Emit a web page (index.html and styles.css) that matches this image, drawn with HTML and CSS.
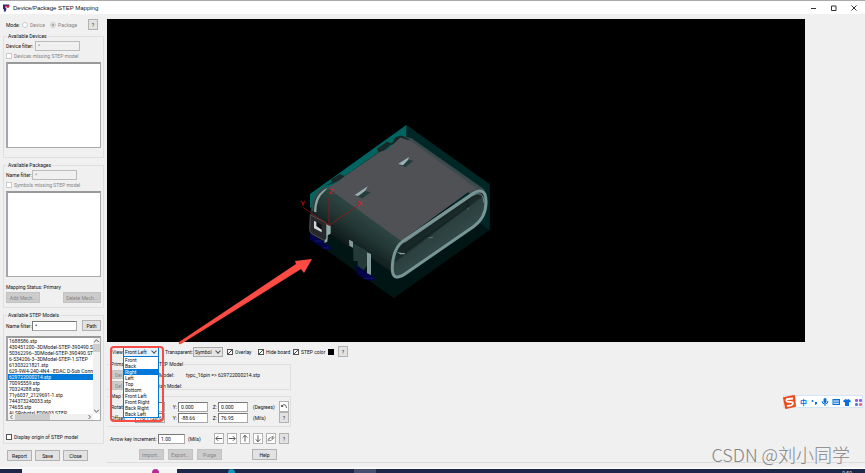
FILE: index.html
```html
<!DOCTYPE html>
<html lang="en">
<head>
<meta charset="utf-8">
<title>Device/Package STEP Mapping</title>
<link rel="stylesheet" href="styles.css">
</head>
<body>
<header class="titlebar">
  <svg class="app-icon" viewBox="0 0 8 8"><path d="M0 0h7v3H5L3 5H0z" fill="#25267c"/><path d="M2 1h6L6 4 4 3 2 6z" fill="#d3262f"/><path d="M1 4l3 1-1 3H1z" fill="#25267c"/><path d="M3 2l2 1-2 1z" fill="#fff"/></svg>
  <h1>Device/Package STEP Mapping</h1>
  <button class="win" aria-label="Minimize"><svg viewBox="0 0 6 6"><path d="M0 3.5h5"/></svg></button>
  <button class="win" aria-label="Maximize"><svg viewBox="0 0 6 6"><path d="M.5 1h4.500v4.500H.5z"/></svg></button>
  <button class="win" aria-label="Close"><svg viewBox="0 0 6 6"><path d="M.5.5l5 5M5.500.5l-5 5"/></svg></button>
</header>
<main class="workspace">
  <aside class="sidebar">
    <div class="row mode">
      <span class="mode-name">Mode:</span>
      <label class="choice off"><input type="radio" name="mode" disabled>Device</label>
      <label class="choice off"><input type="radio" name="mode" checked disabled>Package</label>
      <button class="help">?</button>
    </div>
    <section class="group devices">
      <h2>Available Devices</h2>
      <div class="row"><label class="device-name" for="df">Device filter:</label><input class="field off" id="df" type="text" value="*" disabled></div>
      <label class="row off"><input type="checkbox" disabled>Devices missing STEP model</label>
      <div class="listbox" role="listbox" aria-label="Devices"></div>
    </section>
    <section class="group packages">
      <h2>Available Packages</h2>
      <div class="row"><label class="filter-name" for="pf">Name filter:</label><input class="field off" id="pf" type="text" value="*" disabled></div>
      <label class="row off"><input type="checkbox" disabled>Symbols missing STEP model</label>
      <div class="listbox" role="listbox" aria-label="Packages"></div>
      <p class="status">Mapping Status: Primary</p>
      <div class="row between"><button class="btn wide" disabled>Add Mech...</button><button class="btn wider" disabled>Delete Mech...</button></div>
    </section>
    <section class="group models">
      <h2>Available STEP Models</h2>
      <div class="row"><label class="filter-name" for="nf">Name filter:</label><input class="field" id="nf" type="text" value="*"><button class="btn path">Path</button></div>
      <div class="listbox filled">
        <ul class="files" role="listbox" aria-label="STEP models">
          <li>1688586.stp</li><li>430451200--3DModel-STEP-390490.ST</li><li>50362296--3DModel-STEP-390490.ST</li><li>6-534206-3--3DModel-STEP-1.STEP</li><li>61303221821.stp</li><li>629-9W4-240-4N4 - EDAC D-Sub Conn</li><li class="selected">629722000214.stp</li><li>70095559.stp</li><li>70324288.stp</li><li>71y6037_2129691-1.stp</li><li>744373240033.stp</li><li>74655.stp</li><li>ALSRobotsLED0603.STEP</li>
        </ul>
        <div class="vscroll"><svg viewBox="0 0 6 4"><path d="M1 3l2-2 2 2"/></svg><i></i><svg viewBox="0 0 6 4"><path d="M1 1l2 2 2-2"/></svg></div>
        <div class="hscroll"><svg viewBox="0 0 4 6"><path d="M3 1L1 3l2 2"/></svg><i></i><svg viewBox="0 0 4 6"><path d="M1 1l2 2-2 2"/></svg></div>
      </div>
      <label class="row origin"><input type="checkbox">Display origin of STEP model</label>
    </section>
    <div class="row actions"><button class="btn">Report</button><button class="btn">Save</button><button class="btn">Close</button></div>
  </aside>
  <div class="content">
    <svg class="viewer" viewBox="107 19 698 323" role="img" aria-label="3D connector preview">
      <defs>
        <linearGradient id="side" gradientUnits="userSpaceOnUse" x1="220" y1="290" x2="145" y2="400"><stop offset="0" stop-color="#304946"/><stop offset=".45" stop-color="#233735"/><stop offset="1" stop-color="#091312"/></linearGradient>
        <linearGradient id="back" gradientUnits="userSpaceOnUse" x1="440" y1="145" x2="465" y2="110"><stop offset="0" stop-color="#414c4e"/><stop offset="1" stop-color="#0d302e"/></linearGradient>
        <linearGradient id="hole" gradientUnits="userSpaceOnUse" x1="400" y1="320" x2="460" y2="400"><stop offset="0" stop-color="#142322"/><stop offset=".35" stop-color="#1b2c2b"/><stop offset=".4" stop-color="#2b403f"/><stop offset="1" stop-color="#334b49"/></linearGradient>
      </defs>
      <svg x="295" y="115" width="210" height="190" viewBox="0 0 630 570">
        <path d="M334 30L584 208V345L296 550 45 370V237z" fill="#001514"/>
        <path d="M334 30L584 208V345L334 170z" fill="#002725"/>
        <path d="M334 30V75L45 280V237z" fill="#006461"/>
        <path d="M105 214Q70 222 52 264L45 310 95 330V350L175 405V430L200 450 212 415 229 430 290 472 294 420 325 378 345 350z" fill="url(#side)"/>
        <path d="M318 63L350 70 570 224 530 240z" fill="url(#back)"/>
        <path d="M88 214L111 202 108 193 134 178 149 183 250 112 246 101 276 80 291 85 300 68Q318 56 334 68L345 74 285 91 265 109 251 114 136 194 115 205z" fill="#182827"/>
        <path d="M316 68Q334 72 350 80L545 222Q532 223 515 235L319 378 98 218 128 201 147 185 254 111 278 103z" fill="#505155"/>
        <path d="M57 290Q57 235 99 218L92 226Q63 250 64 292z" fill="#8da4a5"/><path d="M52 288Q52 232 92 218" fill="none" stroke="#344c4b" stroke-width="6"/>
        <path d="M308 147L339 134 356 137 331 157z M178 241L210 227 227 232 202 250z" fill="#253c3c"/>
        <path d="M309 147L342 126 339 135 324 151z M178 241L218 214 211 227 190 243z" fill="#9ab0b3"/>
        <path d="M325 378L528 239Q575 208 573 264Q572 309 535 335L334 474Q289 506 292 454Q295 399 325 378z" fill="url(#hole)" stroke="#789596" stroke-width="9"/>
        <path d="M329 382L530 243Q566 221 567 264" fill="none" stroke="#9bb1b2" stroke-width="2"/>
        <path d="M332 404L512 278 517 254 524 273 350 399 320 420z" fill="#142423"/><path d="M305 411l11 7h13v-4h-9z" fill="#8ca3a5"/><path d="M400 369l14-2M519 278v6" stroke="#718988" stroke-width="2"/>
        <path d="M45 353L110 398 101 405 84 400 45 374z M185 449L239 489 230 499 210 492 185 477z" fill="#030447"/>
        <path d="M84 399h20M206 490h32M60 378h18" stroke="#101683" stroke-width="3"/>
        <path d="M175 385L216 407V452L206 465 188 453V438H175z" fill="#243a38"/><path d="M162 374l12 6v18l-11-6zM216 412l12 5v63l-12-5z" fill="#829c9c"/>
        <path d="M46 299L90 322Q97 326 97 335V367Q97 381 83 374L52 357Q44 352 44 343z" fill="#28292c" stroke="#505255" stroke-width="3"/>
        <path d="M94 328l13 5v23l-9 5-1 19-9 4 1-7 5-8z" fill="#91aaac"/>
        <path d="M57 316L80 330V352L57 341z" fill="#111"/><path d="M57 317l7 4v12l16 11v8l-23-12z" fill="#d0d7d8"/>
        <path d="M102 246V331L24 277M102 331L189 272" fill="none" stroke="#ad1014" stroke-width="2"/>
        <g class="axis"><text x="101" y="237">Z</text><text x="16" y="274">Y</text><text x="187" y="273">X</text></g>
      </svg>
      <path d="M179 342L296 264 295 261 312 259 304 273 301 269 181 344Q178 345 179 342z" fill="#fb4b43"/>
    </svg>
    <div class="panel">
      <div class="row toolbar">
        <label class="view-name" for="view">View:</label>
        <span class="combo view open"><select id="view"><option>Front Left</option></select>
          <ul class="popup" role="listbox" aria-label="View choices"><li>Front</li><li>Back</li><li class="selected">Right</li><li>Left</li><li>Top</li><li>Bottom</li><li>Front Left</li><li>Front Right</li><li>Back Right</li><li>Back Left</li></ul></span>
        <label class="trans-name" for="trans">Transparent:</label>
        <span class="combo"><select id="trans"><option>Symbol</option></select></span>
        <label class="check1"><input type="checkbox" checked>Overlay</label>
        <label class="check2"><input type="checkbox" checked>Hide board</label>
        <label class="check3"><input type="checkbox" checked>STEP color</label>
        <button class="swatch" aria-label="STEP color value"></button>
        <button class="help">?</button>
      </div>
      <section class="group primary">
        <h2><span class="half">Prima</span>STEP Model</h2>
        <div class="row"><button class="btn" disabled>Del</button><span class="kind">Model:</span><span>typc_16pin =&gt; 629722000214.stp</span></div>
        <div class="row"><button class="btn" disabled>Del</button><span class="kind">ian Model:</span></div>
      </section>
      <section class="group mapping">
        <h2>Map S</h2>
        <div class="axes">
          <span>Rotati</span><input class="field" aria-label="Rotation X" value=""><label for="ry">Y:</label><input class="field" id="ry" value="0.000"><label for="rz">Z:</label><input class="field" id="rz" value="0.000"><span>(Degrees)</span><button class="tool" aria-label="Reset"><svg viewBox="0 0 10 10"><path d="M2 5l2-2q4-1 4 4M2 3v2h2"/></svg></button>
          <span>Offset</span><input class="field" aria-label="Offset X" value="-70.1128.62"><label for="oy">Y:</label><input class="field" id="oy" value="-88.66"><label for="oz">Z:</label><input class="field" id="oz" value="76.95"><span>(Mils)</span><button class="help">?</button>
        </div>
      </section>
      <div class="row increment">
        <label for="inc">Arrow key increment:</label><input class="field" id="inc" value="1.00"><span class="unit">(Mils)</span>
        <button class="tool" aria-label="Left"><svg viewBox="0 0 10 10"><path d="M9 5H1M4 2L1 5l3 3"/></svg></button>
        <button class="tool" aria-label="Right"><svg viewBox="0 0 10 10"><path d="M1 5h8M6 2l3 3-3 3"/></svg></button>
        <button class="tool" aria-label="Up"><svg viewBox="0 0 10 10"><path d="M5 9V1M2 4l3-3 3 3"/></svg></button>
        <button class="tool" aria-label="Down"><svg viewBox="0 0 10 10"><path d="M5 1v8M2 6l3 3 3-3"/></svg></button>
        <button class="tool" aria-label="Rotate"><svg viewBox="0 0 10 10"><path d="M1 8l3-4 4-2-2 3 3-1-3 3-4 1zM1 6l3-2" stroke="#777"/></svg></button>
        <button class="help">?</button>
      </div>
      <div class="row commands"><button class="btn" disabled>Import...</button><button class="btn" disabled>Export...</button><button class="btn" disabled>Purge</button><button class="btn last">Help</button></div>
      <div class="marker"></div>
    </div>
  </div>
</main>
<footer class="taskbar">
  <span class="start"></span><span class="search"><i></i></span><span class="apps"><i></i><b></b><span>9:59</span></span>
</footer>
<div class="ime">
  <svg class="logo" viewBox="0 0 15 14"><path d="M1 3Q1 2 2 2L12 0q1 0 1 1l1 10q0 1-1 1L4 14q-1 0-1-1z" fill="#f04b1a"/><path d="M11 3.500L6 4q-2 .4-1.500 1.800Q5 7 8 6.800q3 0 3 1.500T9 10.300L5 11" fill="none" stroke="#fff" stroke-width="1.800"/></svg>
  <span>中</span>
  <svg viewBox="0 0 8 8"><circle cx="2.500" cy="3" r="1"/><path d="M5 4h2v2L5 7z"/></svg>
  <svg viewBox="0 0 8 8"><rect x="2.500" width="3" height="5" rx="1.500"/><path d="M1 3q0 3 3 3t3-3M4 6v2" fill="none" stroke="#0870d8"/></svg>
  <svg viewBox="0 0 8 8"><rect x="1" y="1.500" width="6.500" height="5" fill="#b4d8fa" stroke="#0870d8"/><path d="M2 3h5M2 4.500h5" stroke="#0870d8" stroke-width=".6"/></svg>
  <svg viewBox="0 0 8 8"><path d="M2.500 1Q4 2 5.500 1L8 3 7 4.500 6 4v4H2V4l-1 .5L0 3z"/></svg>
  <svg viewBox="0 0 8 8"><rect x="1" y="1" width="3" height="3" rx="1" fill="#955de7"/><rect x="5" y="1" width="3" height="3" rx="1" fill="#955de7"/><rect x="1" y="5" width="3" height="3" rx="1" fill="#5878e5"/><rect x="5" y="5" width="3" height="3" rx="1" fill="#e66a8f"/></svg>
</div>
<div class="watermark">CSDN @刘小同学</div>
</body>
</html>
```
FILE: styles.css
```css
* { box-sizing: border-box; }
body { margin: 0; min-height: 100vh; display: flex; flex-direction: column; position: relative; overflow: hidden; background: #f0f0f0; color: #111; font: 5px/8px Roboto, "Liberation Sans", sans-serif; }
h1, h2, p, ul { margin: 0; padding: 0; font: inherit; list-style: none; }
button, input, select { margin: 0; font: inherit; color: inherit; }
.titlebar { display: flex; align-items: center; height: 14px; flex: none; padding: 0 8px 0 3px; border-top: 1px solid #aaa; background: #fff; }
.titlebar h1 { flex: 1; margin-left: 3px; font: 6px/10px "Liberation Sans", sans-serif; }
.app-icon { width: 7px; height: 8px; }
.win { width: 6px; height: 6px; padding: 0; margin-left: 14px; border: 0; background: none; }
.win svg { display: block; fill: none; stroke: #333; stroke-width: 1; }
.workspace { display: flex; flex: 1; border-bottom: 2px solid #fafafa; }
.sidebar { width: 107px; flex: none; padding: 5px 3px 0; }
.content { flex: 1; min-width: 0; padding-top: 5px; }
.row { display: flex; align-items: center; white-space: nowrap; }
.row label, label.row { display: flex; align-items: center; flex: none; }
.off { color: #858585; }
.mode { height: 11px; padding-left: 3px; }
.mode-name { width: 16px; }
.mode .choice { width: 28px; }
.mode .help { margin-left: auto; margin-right: 6px; }
input[type="checkbox"], input[type="radio"] { appearance: none; flex: none; width: 6px; height: 6px; margin-right: 2px; border: 1px solid #555; background: #fff; }
input[type="radio"] { border-radius: 3px; }
input:disabled { border-color: #ccc; }
input[type="radio"]:checked { background: radial-gradient(#aaa 1px, #fff 2px); }
input[type="checkbox"]:checked { background: linear-gradient(135deg, #fff 40%, #444 50%, #fff 60%); }
.help, .btn, .tool { flex: none; padding: 0; height: 11px; border: 1px solid #b2b2b2; background: #e2e2e2; line-height: 8px; }
.help, .tool { width: 10px; }
.btn { width: 25px; }
.btn:disabled { color: #858585; background: #ccc; border-color: #c2c2c2; }
.group { position: relative; border: 1px solid #dfdfdf; padding: 4px 2px 0; }
.group h2 { position: absolute; top: -5px; left: 3px; padding: 0 1px; background: #f0f0f0; white-space: nowrap; }
.field { width: 45px; min-width: 0; height: 10px; padding: 0 2px; border: 1px solid #aaa; border-top-color: #777; border-left-color: #777; border-radius: 0; background: #fff; line-height: 8px; }
.field.off { background: #f0f0f0; border-color: #bbb; }
.sidebar .group .row { min-height: 10px; }
.row .device-name { width: 29px; }
.row .filter-name { width: 26px; }
.devices { margin: 6px 0 7px; height: 122px; }
.packages { height: 143px; margin-bottom: 7px; }
.models { height: 129px; }
.listbox { height: 86px; margin-top: 1px; border: 1px solid #aaa; border-top: 2px solid #999; border-left: 2px solid #a5a5ad; background: #fff; }
.status { margin-top: 6px; line-height: 8px; }
.between { justify-content: space-between; margin-top: 1px; }
.wide { width: 34px; }
.wider { width: 38px; }
.path { width: 19px; margin-left: 5px; }
.filled { display: grid; grid-template: 1fr 6px / 1fr 7px; height: 85px; margin-top: 5px; overflow: hidden; }
.files { overflow: hidden; min-height: 0; line-height: 6px; white-space: nowrap; }
.files li { height: 6px; padding-left: 1px; }
.selected { background: #0078d7; color: #fff; }
.vscroll, .hscroll { display: flex; background: #f0f0f0; }
.vscroll { flex-direction: column; justify-content: space-between; }
.vscroll svg { width: 7px; height: 6px; }
.hscroll svg { width: 7px; height: 6px; }
.vscroll svg, .hscroll svg, .tool svg { fill: none; stroke: #333; }
.vscroll svg, .hscroll svg { stroke-width: .7; }
.vscroll i { height: 8px; margin-bottom: auto; background: #cdcdcd; }
.hscroll i { width: 35px; margin-right: auto; background: #cdcdcd; }
.origin { margin-top: 11px; }
.actions { margin: 6px 0 0 4px; gap: 3px; }
.viewer { display: block; position: relative; z-index: 5; width: calc(100% - 60px); background: #000; overflow: visible; pointer-events: none; }
.axis { font: 22px "Liberation Sans", sans-serif; fill: #f01015; }
.panel { position: relative; height: 121px; padding-top: 4px; border-bottom: 1px solid #ddd; }
.toolbar { height: 11px; padding-left: 5px; }
.row .view-name { width: 11px; }
.row .trans-name { width: 28px; }
.combo { position: relative; flex: none; width: 30px; height: 10px; }
.combo select { appearance: none; display: block; width: 100%; height: 10px; padding: 0 1px; border: 1px solid #aaa; border-radius: 0; background: #e5e5e5; line-height: 8px; }
.combo::after { content: ""; position: absolute; right: 3px; top: 2px; width: 3px; height: 3px; border: solid #555; border-width: 0 1px 1px 0; transform: rotate(45deg); }
.combo.view { width: 36px; margin-right: 6px; }
.combo.open select { border-color: #0078d7; background: #e5f1fb; }
.popup { position: absolute; z-index: 3; top: 9px; left: 0; right: 0; border: 1px solid #0078d7; background: #fff; line-height: 6px; }
.popup li { padding-left: 1px; }
.check1 { width: 31px; margin-left: 4px; }
.check2, .check3 { width: 35px; }
.swatch { width: 6px; height: 6px; padding: 0; border: 0; background: #000; }
.toolbar .help { margin-left: 4px; }
.panel .group { width: 184px; border-left: 0; }
.primary { height: 26px; margin-top: 7px; padding-left: 5px; }
.primary .half { display: inline-block; width: 45px; }
.primary .btn { width: 40px; height: 9px; padding-left: 2px; text-align: left; }
.primary .row { height: 11px; }
.primary .kind { width: 27px; margin-left: 7px; }
.mapping { height: 31px; margin-top: 6px; padding-left: 4px; }
.axes { display: grid; grid-template-columns: 24px 36px 7px 34px 6px 35px 26px 10px; grid-template-rows: 11px 11px; align-items: center; }
.axes .field { width: 30px; }
.axes label { text-align: right; padding-right: 1px; }
.increment { height: 11px; margin-top: 6px; padding-left: 3px; gap: 3px; }
.row.increment label { width: 45px; }
.increment .field { width: 27px; }
.unit { width: 23px; }
.tool { background: #fff; }
.tool svg { display: block; width: 8px; height: 9px; stroke-width: 1; }
.commands { margin-top: 5px; padding-left: 32px; gap: 4px; }
.commands .last { margin-left: 26px; }
.marker { position: absolute; z-index: 4; left: 3px; top: 4px; width: 54px; height: 76px; border: 2px solid #f64b46; border-radius: 4px; pointer-events: none; }
.taskbar { display: flex; height: 4px; flex: none; overflow: hidden; background: #1d2747; color: #ddd; }
.start { width: 22px; }
.search { width: 155px; background: #f5f5f5; }
.search i { display: block; width: 7px; height: 4px; margin-left: 130px; border-radius: 4px 4px 0 0; background: #b52d93; }
.apps { display: flex; flex: 1; padding-right: 13px; }
.apps i { width: 7px; height: 4px; margin-left: 51px; border-radius: 4px 4px 0 0; background: #1695b9; }
.apps b { width: 22px; margin-left: 119px; background: #46506d; }
.apps span { margin-left: auto; }
.ime { position: absolute; right: 2px; bottom: 65px; display: flex; align-items: center; gap: 3px; width: 80px; height: 13px; border: 1px solid #d6e5f5; background: #fff; color: #0870d8; font: bold 7px/10px "Noto Sans CJK SC", sans-serif; }
.ime svg { flex: none; width: 8px; height: 8px; fill: #0870d8; }
.ime .logo { width: 15px; height: 14px; margin-left: -2px; }
.watermark { position: absolute; right: 15px; bottom: 7px; color: #858585; font: 300 18px/24px "Noto Sans CJK SC", sans-serif; }
```
